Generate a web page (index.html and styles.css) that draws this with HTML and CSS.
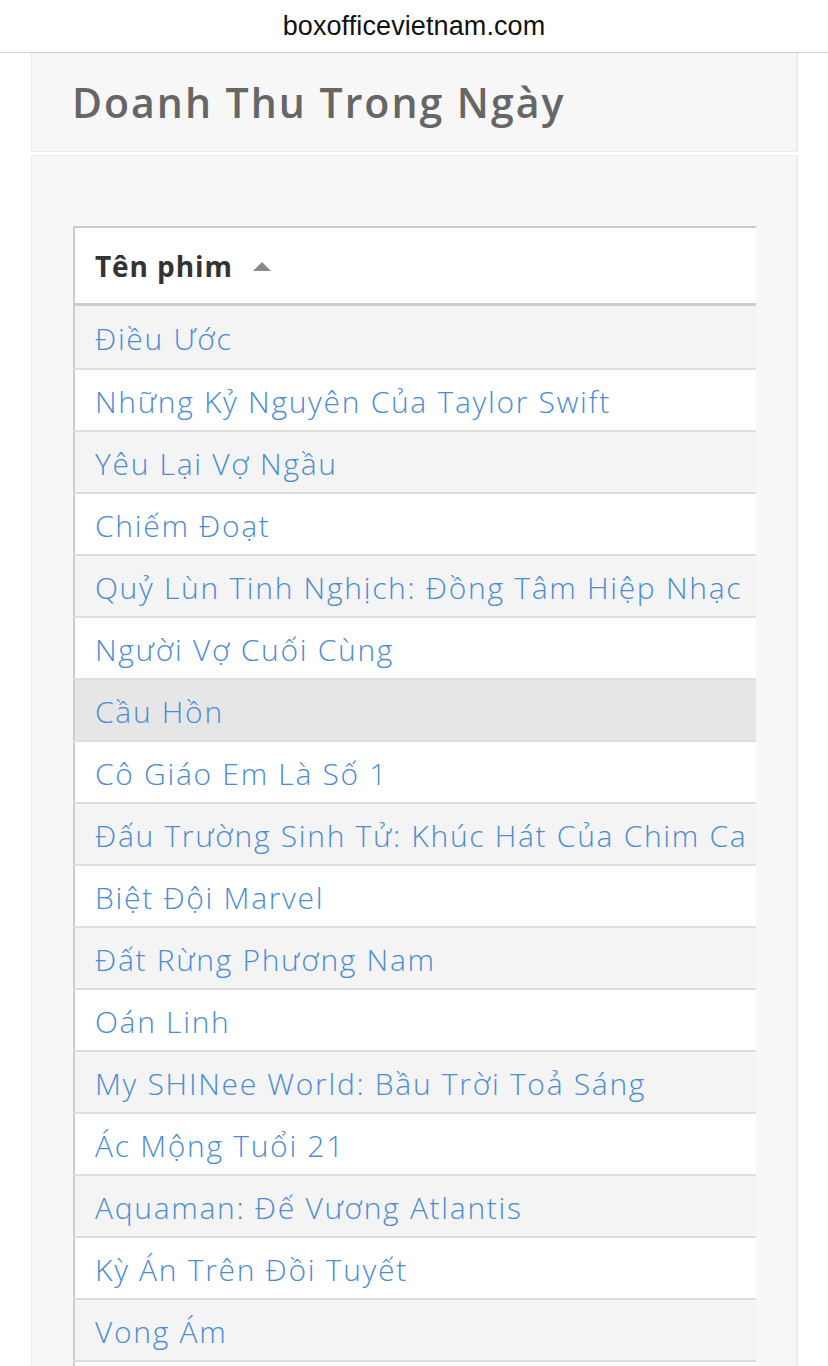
FILE: index.html
```html
<!DOCTYPE html>
<html lang="vi">
<head>
<meta charset="utf-8">
<title>Doanh Thu Trong Ngày</title>
<link rel="stylesheet" href="styles.css">
</head>
<body>
<div class="urlbar">boxofficevietnam.com</div>
<div class="page">
  <div class="card card-head">
    <h1 class="title">Doanh Thu Trong Ngày</h1>
  </div>
  <div class="card card-body">
    <div class="table-wrap">
      <table class="films">
        <thead>
          <tr>
            <th class="col-name">Tên phim <span class="sort-up"></span></th>
            <th class="col-other"></th>
          </tr>
        </thead>
        <tbody>
          <tr><td><a href="#">Điều Ước</a></td><td></td></tr>
          <tr><td><a href="#">Những Kỷ Nguyên Của Taylor Swift</a></td><td></td></tr>
          <tr><td><a href="#">Yêu Lại Vợ Ngầu</a></td><td></td></tr>
          <tr><td><a href="#">Chiếm Đoạt</a></td><td></td></tr>
          <tr><td><a href="#">Quỷ Lùn Tinh Nghịch: Đồng Tâm Hiệp Nhạc</a></td><td></td></tr>
          <tr><td><a href="#">Người Vợ Cuối Cùng</a></td><td></td></tr>
          <tr class="hover"><td><a href="#">Cầu Hồn</a></td><td></td></tr>
          <tr><td><a href="#">Cô Giáo Em Là Số 1</a></td><td></td></tr>
          <tr><td><a href="#">Đấu Trường Sinh Tử: Khúc Hát Của Chim Ca V</a></td><td></td></tr>
          <tr><td><a href="#">Biệt Đội Marvel</a></td><td></td></tr>
          <tr><td><a href="#">Đất Rừng Phương Nam</a></td><td></td></tr>
          <tr><td><a href="#">Oán Linh</a></td><td></td></tr>
          <tr><td><a href="#">My SHINee World: Bầu Trời Toả Sáng</a></td><td></td></tr>
          <tr><td><a href="#">Ác Mộng Tuổi 21</a></td><td></td></tr>
          <tr><td><a href="#">Aquaman: Đế Vương Atlantis</a></td><td></td></tr>
          <tr><td><a href="#">Kỳ Án Trên Đồi Tuyết</a></td><td></td></tr>
          <tr><td><a href="#">Vong Ám</a></td><td></td></tr>
          <tr><td></td><td></td></tr>
        </tbody>
      </table>
    </div>
  </div>
</div>
</body>
</html>
```

FILE: styles.css
```css
html, body {
  margin: 0;
  padding: 0;
  background: #ffffff;
  height: 1366px;
  overflow: hidden;
}

body {
  font-family: "Open Sans", "Noto Sans", sans-serif;
}

.urlbar {
  height: 53px;
  border-bottom: 1px solid #cfcfcf;
  display: flex;
  align-items: center;
  justify-content: center;
  font-family: "Liberation Sans", Arial, sans-serif;
  font-size: 27px;
  letter-spacing: 0.1px;
  color: #111;
  box-sizing: border-box;
}

.page {
  padding: 0 30px 0 31px;
}

.card {
  background: #f7f7f7;
  border: 1px solid #ebebeb;
  border-right-width: 2px;
}

.card-head {
  height: 99px;
  box-sizing: border-box;
  display: flex;
  align-items: center;
  padding-left: 40px;
  border-top: none;
}

.title {
  margin: 0;
  font-size: 41px;
  font-weight: 600;
  color: #666666;
  letter-spacing: 2px;
}

.card-body {
  margin-top: 3px;
  padding: 70px 40px 0 41px;
  height: 1300px;
}

.table-wrap {
  width: 683px;
  overflow: hidden;
}

.films {
  border-collapse: collapse;
  width: 1100px;
  border-left: 2px solid #cccccc;
  table-layout: fixed;
}

.films th {
  background: #ffffff;
  height: 75px;
  border-top: 2px solid #cccccc;
  border-bottom: 3px solid #cccccc;
  text-align: left;
  padding: 0 0 0 20px;
  font-size: 28px;
  font-weight: 700;
  color: #333333;
  letter-spacing: 0.9px;
  white-space: nowrap;
}

.col-name {
  width: 800px;
}

.sort-up {
  display: inline-block;
  width: 0;
  height: 0;
  margin-left: 12px;
  vertical-align: 6px;
  border-left: 9px solid transparent;
  border-right: 9px solid transparent;
  border-bottom: 9px solid #888888;
}

.films td {
  height: 58px;
  padding: 2px 0 0 20px;
  border-bottom: 2px solid #dddddd;
  white-space: nowrap;
  font-size: 30px;
  font-weight: 300;
  letter-spacing: 1.7px;
}

.films tbody tr:first-child td {
  height: 60px;
}

.films tbody tr:nth-child(odd) td {
  background: #f4f4f4;
}

.films tbody tr:nth-child(even) td {
  background: #ffffff;
}

.films tbody tr.hover td {
  background: #e6e6e6;
}

.films a {
  color: #4a8cd8;
  text-decoration: none;
}
```
